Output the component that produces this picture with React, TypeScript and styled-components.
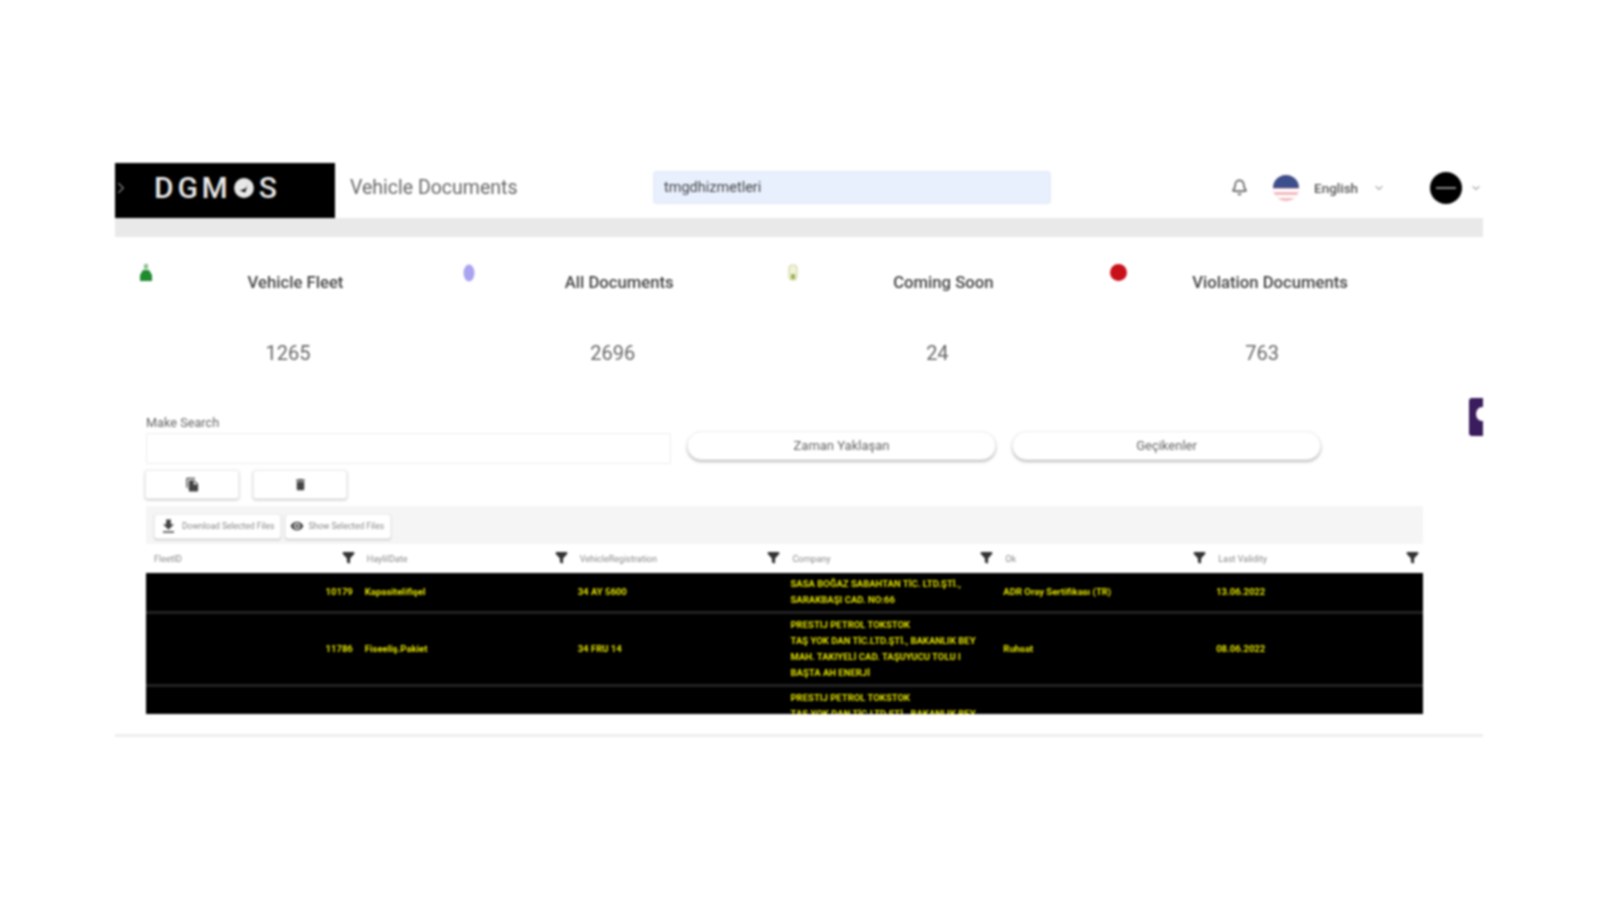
import { Bell, ChevronDown, ChevronRight, Filter } from 'lucide-react';
import { MdDelete, MdFileCopy, MdFileDownload, MdVisibility } from 'react-icons/md';
import styled, { createGlobalStyle } from 'styled-components';

const GlobalStyle = createGlobalStyle`
    html, body {
        margin: 0;
        background: #fff;
        font-family: Roboto, "Liberation Sans", sans-serif;
    }
    #root {
        filter: blur(1.1px);
    }
`;

const Page = styled.div`
    position: relative;
    box-sizing: border-box;
    width: 1368px;
    height: 900px;
    margin-left: 115px;
    padding-top: 163px;
`;

const Header = styled.header`
    display: flex;
    align-items: flex-start;
    height: 55px;
`;

const Logo = styled.div`
    position: relative;
    flex: none;
    box-sizing: border-box;
    display: flex;
    align-items: center;
    width: 220px;
    height: 55px;
    padding: 0 0 6px 39px;
    background: #000;
    color: #e8e8e8;
    font-size: 30px;
    font-weight: 500;
    letter-spacing: 3.8px;
    svg.ouvrir {
        position: absolute;
        left: -3px;
        top: 16px;
        color: #777;
    }
`;

const LogoMark = styled.svg`
    flex: none;
    width: 22px;
    height: 22px;
    margin: 0 4px 0 1px;
`;

const PageTitle = styled.div`
    width: 318px;
    padding: 13px 0 0 15px;
    box-sizing: border-box;
    color: #666;
    font-size: 19.5px;
    line-height: 24px;
`;

const SearchBox = styled.div`
    box-sizing: border-box;
    width: 398px;
    height: 33px;
    margin-top: 8px;
    padding: 0 10px;
    background: #e8f0fe;
    border: 1px solid #e2e9f6;
    border-radius: 3px;
    color: #444;
    font-size: 14.5px;
    line-height: 32px;
`;

const HeaderTools = styled.div`
    display: flex;
    align-items: center;
    height: 33px;
    margin-top: 8px;
    margin-left: 180px;
    color: #666;
`;

const Flag = styled.svg`
    width: 26px;
    height: 26px;
    margin-left: 25px;
    border-radius: 50%;
`;

const Language = styled.span`
    margin-left: 15px;
    color: #555;
    font-size: 13.5px;
    font-weight: 500;
`;

const Caret = styled(ChevronDown)<{ $gap: number }>`
    margin-left: ${(props) => props.$gap}px;
`;

const Avatar = styled.div`
    box-sizing: border-box;
    display: flex;
    align-items: center;
    justify-content: center;
    width: 32px;
    height: 32px;
    margin-left: 45px;
    border-radius: 50%;
    background: #000;
    &::after {
        content: '';
        width: 20px;
        height: 2px;
        background: #888;
    }
`;

const GreyBand = styled.div`
    height: 19px;
    background: #e9e9e9;
`;

const Stats = styled.section`
    display: grid;
    grid-template-columns: repeat(4, 312px);
    column-gap: 12.7px;
    height: 146px;
    padding: 27px 0 0 17px;
    box-sizing: border-box;
`;

const StatCard = styled.div`
    display: flex;
    flex-direction: column;
`;

const StatHead = styled.div`
    display: flex;
    align-items: flex-start;
    padding-left: 8px;
    height: 77px;
`;

const StatIcon = styled.svg<{ $shift?: number }>`
    flex: none;
    display: block;
    margin-left: ${(props) => props.$shift || 0}px;
`;

const StatTitle = styled.div`
    flex: 1;
    padding: 11px 5px 0 0;
    text-align: center;
    color: #444;
    font-size: 16.7px;
    font-weight: 500;
    line-height: 16px;
`;

const StatValue = styled.div`
    text-align: center;
    color: #666;
    font-size: 20px;
    line-height: 24px;
`;

const Content = styled.section`
    padding: 30px 0 0 31px;
`;

const FilterRow = styled.div`
    display: flex;
    align-items: flex-start;
`;

const FieldBlock = styled.div`
    width: 525px;
`;

const FieldLabel = styled.label`
    display: block;
    height: 20px;
    color: #666;
    font-size: 12.7px;
    line-height: 20px;
`;

const FieldInput = styled.div`
    box-sizing: border-box;
    height: 31px;
    background: #fff;
    border: 1px solid #eee;
    border-radius: 2px;
`;

const PillButton = styled.button`
    width: 309px;
    height: 29px;
    margin: 18px 0 0 16px;
    background: #fff;
    border: 1px solid #eee;
    border-radius: 15px;
    box-shadow: 0 2px 3px rgba(0, 0, 0, 0.25);
    color: #666;
    font-family: inherit;
    font-size: 13px;
    padding: 0;
    & + & {
        margin-left: 16px;
    }
`;

const IconButtons = styled.div`
    display: flex;
    gap: 14px;
    margin-top: 6px;
    margin-left: -1px;
`;

const IconButton = styled.button`
    display: flex;
    align-items: center;
    justify-content: center;
    width: 94px;
    height: 29px;
    padding: 0;
    background: #fff;
    border: 1px solid #eee;
    border-radius: 3px;
    box-shadow: 0 1px 3px rgba(0, 0, 0, 0.25);
    color: #444;
`;

const Grid = styled.div`
    width: 1277px;
    margin-top: 7px;
`;

const Toolbar = styled.div`
    display: flex;
    align-items: center;
    gap: 4px;
    box-sizing: border-box;
    height: 38px;
    padding: 2px 8px 0;
    background: #f5f5f5;
`;

const ToolButton = styled.button`
    display: flex;
    align-items: center;
    gap: 4px;
    height: 25px;
    padding: 0 6px 0 4px;
    background: #fff;
    border: 1px solid #f0f0f0;
    border-radius: 3px;
    box-shadow: 0 1px 2px rgba(0, 0, 0, 0.2);
    color: #888;
    font-family: inherit;
    font-size: 8.5px;
    svg {
        color: #444;
    }
`;

const GridColumns = styled.div`
    display: grid;
    grid-template-columns: repeat(6, 1fr);
`;

const HeadRow = styled(GridColumns)`
    height: 29px;
    background: #fff;
`;

const HeadCell = styled.div`
    display: flex;
    align-items: center;
    justify-content: space-between;
    padding: 0 4px 0 8px;
    color: #888;
    font-size: 9px;
    svg {
        color: #333;
        fill: #333;
        margin-top: -3px;
    }
`;

const Body = styled.div`
    height: 141px;
    overflow: hidden;
    background: #000;
`;

const DataRow = styled(GridColumns)`
    align-items: center;
    border-bottom: 3px solid #222;
    padding: 3px 0;
`;

const DataCell = styled.div<{ $end?: boolean }>`
    padding: 0 6px;
    color: #e0e000;
    font-size: 9.5px;
    font-weight: 700;
    line-height: 16px;
    text-align: ${(props) => (props.$end ? 'right' : 'left')};
`;

const FooterLine = styled.div`
    height: 3px;
    margin-top: 20px;
    background: #eee;
`;

const SideTab = styled.div`
    position: absolute;
    right: 0;
    top: 398px;
    width: 14px;
    height: 38px;
    overflow: hidden;
    background: #3a1d5c;
    border-radius: 3px 0 0 3px;
    &::after {
        content: '';
        position: absolute;
        left: 7px;
        top: 9px;
        width: 12px;
        height: 14px;
        border-radius: 50%;
        background: #fff;
    }
`;

const stats = [
    { title: 'Vehicle Fleet', value: '1265', icon: 'fleet' },
    { title: 'All Documents', value: '2696', icon: 'all' },
    { title: 'Coming Soon', value: '24', icon: 'soon' },
    { title: 'Violation Documents', value: '763', icon: 'violation' },
];

const columns = ['FleetID', 'HaylilDate', 'VehicleRegistration', 'Company', 'Ok', 'Last Validity'];

const rows = [
    {
        id: '10179',
        name: 'Kapasitelifişel',
        plate: '34 AY 5600',
        company: ['SASA BOĞAZ SABAHTAN TİC. LTD.ŞTİ.,', 'SARAKBAŞI CAD. NO:66'],
        doc: 'ADR Oray Sertifikası (TR)',
        date: '13.06.2022',
    },
    {
        id: '11786',
        name: 'Fiseeliş.Pakiet',
        plate: '34 FRU 14',
        company: ['PRESTIJ PETROL TOKSTOK', 'TAŞ YOK DAN TİC.LTD.ŞTİ., BAKANLIK BEY', 'MAH. TAKIYELİ CAD. TAŞUYUCU TOLU I', 'BAŞTA AH ENERJİ'],
        doc: 'Ruhsat',
        date: '08.06.2022',
    },
    {
        id: '',
        name: '',
        plate: '',
        company: ['PRESTIJ PETROL TOKSTOK', 'TAŞ YOK DAN TİC.LTD.ŞTİ., BAKANLIK BEY'],
        doc: '',
        date: '',
    },
];

const IconeStat = ({ type }: { type: string }) => {
    if (type === 'fleet') {
        return (
            <StatIcon width="12" height="17" viewBox="0 0 12 17">
                <rect x="4" y="0" width="4" height="5" fill="#8fbf8f" />
                <path d="M3 6h6l3 5v6H0v-6z" fill="#1f8a2e" />
            </StatIcon>
        );
    }
    if (type === 'all') {
        return (
            <StatIcon $shift={-2} width="12" height="18" viewBox="0 0 12 18">
                <ellipse cx="6" cy="9" rx="5.5" ry="8.5" fill="#a9a3f0" />
            </StatIcon>
        );
    }
    if (type === 'soon') {
        return (
            <StatIcon $shift={-1} width="10" height="17" viewBox="0 0 10 17">
                <rect x="1" y="1" width="8" height="15" rx="3" fill="#f2f2d8" stroke="#c9d29a" />
                <rect x="3" y="10" width="4" height="5" fill="#9cb35a" />
            </StatIcon>
        );
    }
    return (
        <StatIcon $shift={-4} width="17" height="17" viewBox="0 0 17 17">
            <circle cx="8.5" cy="8.5" r="8.5" fill="#c8101a" />
        </StatIcon>
    );
};

const App = () => (
    <>
        <GlobalStyle />
        <Page>
            <Header>
                <Logo>
                    <ChevronRight className="ouvrir" size={18} />
                    DGM
                    <LogoMark viewBox="0 0 20 20">
                        <circle cx="10" cy="10" r="9" fill="#e8e8e8" />
                        <path d="M6 12c4 0 7-2 8-7l-3 9z" fill="#000" />
                    </LogoMark>
                    S
                </Logo>
                <PageTitle>Vehicle Documents</PageTitle>
                <SearchBox>tmgdhizmetleri</SearchBox>
                <HeaderTools>
                    <Bell size={17} strokeWidth={2.4} />
                    <Flag viewBox="0 0 26 26">
                        <rect width="26" height="26" fill="#f3b9be" />
                        <rect y="14" width="26" height="3" fill="#fff" />
                        <rect y="20" width="26" height="3" fill="#fff" />
                        <rect width="26" height="13" fill="#3c4f8c" />
                    </Flag>
                    <Language>English</Language>
                    <Caret size={12} $gap={15} />
                    <Avatar />
                    <Caret size={12} $gap={8} />
                </HeaderTools>
            </Header>
            <GreyBand />
            <Stats>
                {stats.map((stat) => (
                    <StatCard key={stat.title}>
                        <StatHead>
                            <IconeStat type={stat.icon} />
                            <StatTitle>{stat.title}</StatTitle>
                        </StatHead>
                        <StatValue>{stat.value}</StatValue>
                    </StatCard>
                ))}
            </Stats>
            <Content>
                <FilterRow>
                    <FieldBlock>
                        <FieldLabel>Make Search</FieldLabel>
                        <FieldInput />
                    </FieldBlock>
                    <PillButton>Zaman Yaklaşan</PillButton>
                    <PillButton>Geçikenler</PillButton>
                </FilterRow>
                <IconButtons>
                    <IconButton>
                        <MdFileCopy size={15} />
                    </IconButton>
                    <IconButton>
                        <MdDelete size={15} />
                    </IconButton>
                </IconButtons>
                <Grid>
                    <Toolbar>
                        <ToolButton>
                            <MdFileDownload size={19} />
                            Download Selected Files
                        </ToolButton>
                        <ToolButton>
                            <MdVisibility size={14} />
                            Show Selected Files
                        </ToolButton>
                    </Toolbar>
                    <HeadRow>
                        {columns.map((column) => (
                            <HeadCell key={column}>
                                {column}
                                <Filter size={13} />
                            </HeadCell>
                        ))}
                    </HeadRow>
                    <Body>
                        {rows.map((row, index) => (
                            <DataRow key={index}>
                                <DataCell $end>{row.id}</DataCell>
                                <DataCell>{row.name}</DataCell>
                                <DataCell>{row.plate}</DataCell>
                                <DataCell>
                                    {row.company.map((line) => (
                                        <div key={line}>{line}</div>
                                    ))}
                                </DataCell>
                                <DataCell>{row.doc}</DataCell>
                                <DataCell>{row.date}</DataCell>
                            </DataRow>
                        ))}
                    </Body>
                </Grid>
            </Content>
            <FooterLine />
            <SideTab />
        </Page>
    </>
);

export default App;
